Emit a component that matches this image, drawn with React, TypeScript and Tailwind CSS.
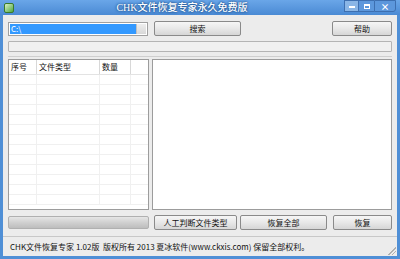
import React from "react";

const font = { fontFamily: '"Noto Sans CJK SC", "Liberation Sans", sans-serif' };

function Btn({ children, className = "" }: { children: React.ReactNode; className?: string }) {
  return (
    <div
      className={
        "flex items-center justify-center h-[15px] rounded-[2px] border border-[#8a8a8a] bg-gradient-to-b from-[#f6f6f6] via-[#e8e8e8] to-[#d6d6d6] text-[8px] text-[#111] leading-none " +
        className
      }
    >
      {children}
    </div>
  );
}

export default function App() {
  const rows = Array.from({ length: 13 });
  return (
    <div className="w-[400px] h-[259px] overflow-hidden bg-[#4f8fd6] flex flex-col" style={font}>
      {/* title bar */}
      <div className="h-[15px] flex items-center relative bg-gradient-to-b from-[#6aa6e8] to-[#4a8ad4]">
        <div className="ml-[4px] w-[10px] h-[10px] rounded-[2px] bg-gradient-to-br from-[#d8f0c8] to-[#4aa83a] border border-[#3a7a2a]" />
        <div className="flex-1 pl-[6px] text-center text-[10px] leading-none text-white font-medium [text-shadow:0_0_2px_#1b4f8c,0_0_3px_#1b4f8c]">
          <span style={{ fontFamily: '"Liberation Serif", serif' }}>CHK</span>文件恢复专家永久免费版
        </div>
        <div className="flex h-[13px] self-start mr-[4px]">
          <div className="w-[15px] h-[12px] flex items-end justify-center pb-[3px] bg-[#8ab6e6] border border-[#3d6fb0]">
            <div className="w-[6px] h-[2px] bg-white" />
          </div>
          <div className="w-[15px] h-[12px] flex items-center justify-center bg-[#5c97dc] border-y border-[#3d6fb0]">
            <div className="w-[6px] h-[5px] border border-white border-t-2" />
          </div>
          <div className="w-[22px] h-[12px] flex items-center justify-center bg-[#5c97dc] border border-[#3d6fb0] rounded-br-[3px] text-white text-[9px] leading-none font-bold">
            ×
          </div>
        </div>
      </div>

      {/* body */}
      <div className="flex-1 mx-[3px] mb-[3px] bg-[#ececec] flex flex-col">
        <div className="flex flex-col px-[5px] pt-[6px] flex-1">
          {/* row 1 */}
          <div className="flex items-center h-[15px]">
            <div className="w-[140px] h-[14px] border border-[#a0a0a0] bg-white flex items-stretch p-[1px]">
              <div className="flex-1 bg-[#3399ff] text-white text-[8px] leading-[10px] pl-[1px]">C:\</div>
              <div className="w-[10px] bg-gradient-to-b from-[#eeeeee] to-[#d8d8d8] border-l border-[#c0c0c0]" />
            </div>
            <Btn className="ml-[6px] w-[87px]">搜索</Btn>
            <div className="flex-1" />
            <Btn className="w-[60px]">帮助</Btn>
          </div>
          {/* row 2 */}
          <div className="mt-[5px] h-[11px] border border-[#b4b4b4] bg-[#f0f0f0] rounded-[1px]" />
          <div className="mt-[4px] h-px bg-[#cfcfcf]" />
          {/* main */}
          <div className="mt-[2px] flex flex-1 min-h-0">
            <div className="w-[141px] border border-[#9c9c9c] bg-white flex flex-col overflow-hidden">
              <div className="flex h-[15px] border-b border-[#e3e3e3] text-[8px] leading-none text-[#111]">
                <div className="w-[28px] flex items-center pl-[2px] border-r border-[#d8d8d8]">序号</div>
                <div className="w-[63px] flex items-center pl-[2px] border-r border-[#d8d8d8]">文件类型</div>
                <div className="w-[31px] flex items-center pl-[2px] border-r border-[#d8d8d8]">数量</div>
                <div className="flex-1" />
              </div>
              {rows.map((_, i) => (
                <div key={i} className="flex h-[10px] border-b border-[#f0f0f0]">
                  <div className="w-[28px] border-r border-[#f0f0f0]" />
                  <div className="w-[63px] border-r border-[#f0f0f0]" />
                  <div className="w-[31px] border-r border-[#f0f0f0]" />
                  <div className="flex-1" />
                </div>
              ))}
            </div>
            <div className="ml-[3px] flex-1 border border-[#9c9c9c] bg-white" />
          </div>
          {/* bottom row */}
          <div className="mt-[5px] flex items-center h-[15px]">
            <div className="w-[141px] h-[13px] border border-[#b0b0b0] rounded-[2px] bg-gradient-to-b from-[#e6e6e6] via-[#d0d0d0] to-[#bdbdbd]" />
            <Btn className="ml-[5px] w-[83px]">人工判断文件类型</Btn>
            <Btn className="ml-[3px] w-[87px]">恢复全部</Btn>
            <Btn className="ml-[6px] flex-1">恢复</Btn>
          </div>
        </div>
        {/* status bar */}
        <div className="mt-[6px] h-[20px] border-t border-[#c8c8c8] flex items-center pl-[7px] text-[8px] leading-none text-[#111] relative">
          CHK文件恢复专家 1.02版&nbsp;&nbsp;版权所有 2013 夏冰软件(www.ckxis.com) 保留全部权利。
          <div className="absolute right-[1px] bottom-[1px] w-[8px] h-[8px] [background:linear-gradient(135deg,transparent_50%,#b0b0b0_50%,#b0b0b0_60%,transparent_60%,transparent_70%,#b0b0b0_70%,#b0b0b0_80%,transparent_80%)]" />
        </div>
      </div>
    </div>
  );
}
